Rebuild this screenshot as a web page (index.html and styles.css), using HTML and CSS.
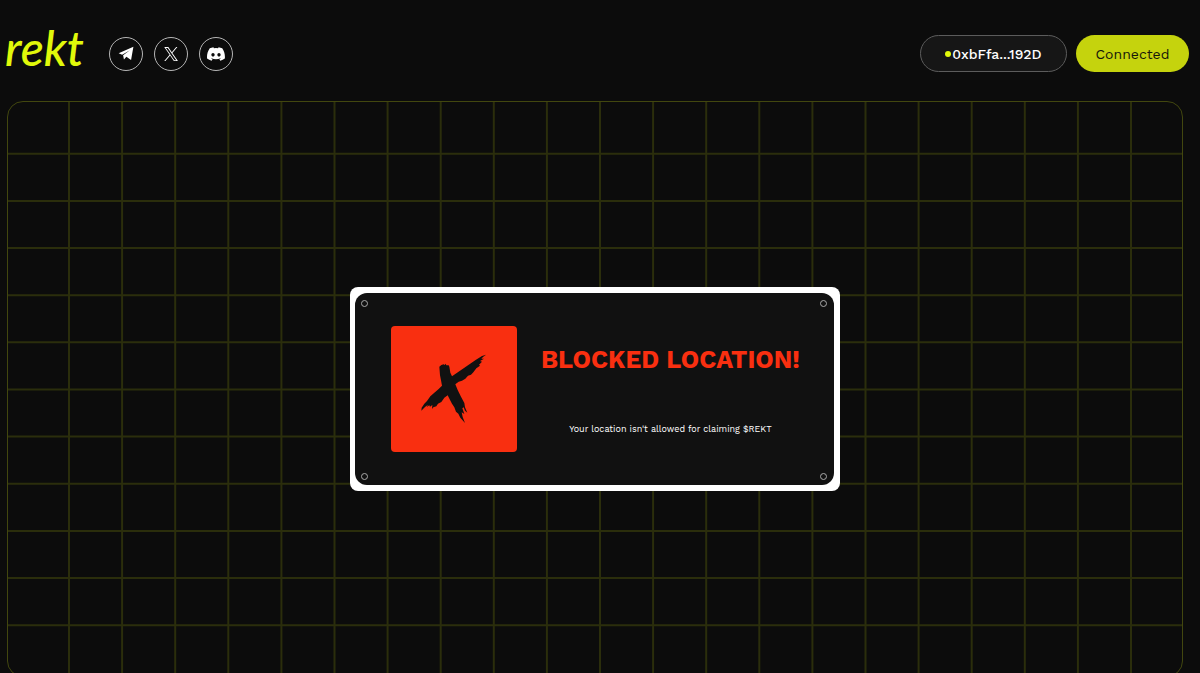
FILE: index.html
```html
<!DOCTYPE html>
<html lang="en">
<head>
    <meta charset="UTF-8">
    <meta name="viewport" content="width=device-width, initial-scale=1.0">
    <title>rekt - claim</title>
    <link rel="stylesheet" href="styles.css">
</head>
<body>
    <header class="header">
        <a class="logo" href="#">rekt</a>
        <nav class="socials" aria-label="Social links">
            <a class="social" href="#" aria-label="Telegram">
                <svg width="17" height="17" viewBox="0 0 16 16">
                    <path fill="currentColor" d="M14.5 1.6 12.3 14.1 7.9 11 5.6 13.6 4.8 9.6 11.2 4.9 3.9 9.1 0.6 7.8Z"/>
                </svg>
            </a>
            <a class="social" href="#" aria-label="X">
                <svg width="14" height="14" viewBox="0 0 24 24">
                    <path fill="currentColor" d="M14.3 10.2 23 0h-2.1l-7.5 8.8L7.4 0H.4l9.2 13.3L.4 24h2.1l8-9.3 6.4 9.3h7Zm-2.9 3.3-.9-1.3L3.2 1.6h3.2l6 8.5.9 1.3 7.7 11.1h-3.2Z"/>
                </svg>
            </a>
            <a class="social" href="#" aria-label="Discord">
                <svg width="18" height="18" viewBox="0 0 24 24">
                    <path fill="currentColor" d="M20.3 4.4A19.8 19.8 0 0 0 15.4 3l-.6 1.3a18.3 18.3 0 0 0-5.6 0L8.6 3a19.7 19.7 0 0 0-4.9 1.4C.5 9-.3 13.6.1 18.1a19.9 19.9 0 0 0 6 3l1.3-2.1-1.9-.9.4-.3c4 1.8 8.2 1.8 12.1 0l.4.3-1.9.9 1.3 2.1a19.8 19.8 0 0 0 6-3c.5-5.2-.8-9.7-3.5-13.7ZM8 15.3c-1.2 0-2.2-1.1-2.2-2.4S6.8 10.5 8 10.5s2.2 1.1 2.2 2.4-1 2.4-2.2 2.4Zm8 0c-1.2 0-2.2-1.1-2.2-2.4s1-2.4 2.2-2.4 2.2 1.1 2.2 2.4-1 2.4-2.2 2.4Z"/>
                </svg>
            </a>
        </nav>
        <div class="wallet">
            <button class="btn btn-address" type="button"><span class="dot"></span>0xbFfa...192D</button>
            <button class="btn btn-connected" type="button">Connected</button>
        </div>
    </header>

    <main class="stage">
        <svg class="grid-lines" viewBox="0 0 11740 5740" preserveAspectRatio="none" aria-hidden="true">
            <path d="M610 0v5740m531-5740v5740m531-5740v5740m531-5740v5740m531-5740v5740m531-5740v5740m531-5740v5740m531-5740v5740m531-5740v5740m531-5740v5740m531-5740v5740m531-5740v5740m531-5740v5740m531-5740v5740m531-5740v5740m531-5740v5740m531-5740v5740m531-5740v5740m531-5740v5740m531-5740v5740m531-5740v5740"/>
            <path d="M0 517h11740M0 989h11740M0 1460h11740M0 1932h11740M0 2403h11740M0 2875h11740M0 3346h11740M0 3818h11740M0 4289h11740M0 4761h11740M0 5232h11740"/>
        </svg>

        <section class="frame">
            <div class="card">
                <span class="screw screw-tl"></span>
                <span class="screw screw-tr"></span>
                <span class="screw screw-bl"></span>
                <span class="screw screw-br"></span>
                <div class="mark">
                    <svg width="88" height="88" viewBox="0 0 264 264" aria-hidden="true">
                        <path fill="#111" d="M88 65 94 60 101 58 104 60 107 56 109 61 116 61 118 65 121 83 126 94 150 77 174 61 198 44 216 33 228 29 219 36 214 41 222 41 210 48 216 50 207 59 210 62 199 70 190 82 183 89 174 92 166 101 156 107 146 110 136 118 143 135 153 155 163 174 165 187 172 203 165 197 161 187 157 190 163 207 155 202 158 216 165 234 151 218 145 206 138 200 133 187 126 176 119 163 113 151 103 158 94 171 84 176 79 184 70 187 66 192 67 180 60 185 58 181 50 186 54 179 45 186 34 197 35 188 43 176 51 168 61 154 73 143 86 132 96 122 93 106 90 91Z"/>
                    </svg>
                </div>
                <div class="message">
                    <h1>BLOCKED LOCATION!</h1>
                    <p>Your location isn't allowed for claiming $REKT</p>
                </div>
            </div>
        </section>
    </main>
</body>
</html>
```
FILE: styles.css
```css
:root {
    --bg: #0c0c0c;
    --lime: #e1f90a;
    --lime-btn: #c5d30d;
    --line: #2b2e0c;
    --red: #f92f10;
    --card: #111111;
}

* {
    margin: 0;
    padding: 0;
    box-sizing: border-box;
}

body {
    font-family: 'Work Sans', Inter, Arial, sans-serif;
    background: var(--bg);
    color: #fff;
    min-height: 100vh;
}

.header {
    display: flex;
    align-items: center;
    padding: 35px 11px 29px 5px;
}

.logo {
    width: 84px;
    margin-right: 20px;
    padding-bottom: 12px;
    color: var(--lime);
    font-family: Lato, sans-serif;
    font-size: 48px;
    font-style: italic;
    font-weight: 500;
    line-height: 24px;
    text-decoration: none;
}

.socials {
    display: flex;
    gap: 11px;
}

.social {
    display: flex;
    align-items: center;
    justify-content: center;
    width: 34px;
    height: 34px;
    border: 1px solid #b5b5b5;
    border-radius: 50%;
    color: #fff;
}

.wallet {
    display: flex;
    gap: 9px;
    margin-left: auto;
}

.btn {
    display: flex;
    align-items: center;
    justify-content: center;
    height: 37px;
    border: 1px solid transparent;
    border-radius: 19px;
    font-family: inherit;
    font-size: 14px;
    cursor: pointer;
}

.btn-address {
    width: 147px;
    background: #161616;
    border-color: #5c5c5c;
    color: #fff;
    font-weight: 500;
}

.btn-connected {
    width: 113px;
    background: var(--lime-btn);
    color: #15170a;
}

.dot {
    width: 6px;
    height: 6px;
    margin-right: 1px;
    border-radius: 50%;
    background: var(--lime);
}

.stage {
    position: relative;
    display: flex;
    align-items: center;
    justify-content: center;
    height: calc(100vh - 97px);
    min-height: 260px;
    margin: 0 17px 0 7px;
    border: 1px solid #42470f;
    border-radius: 16px;
    overflow: hidden;
}

.grid-lines {
    position: absolute;
    inset: 0;
    width: 100%;
    height: 100%;
    fill: none;
    stroke: var(--line);
    stroke-width: 20;
}

.frame {
    position: relative;
    width: 490px;
    padding: 6px 6px 6px 5px;
    background: #fff;
    border-radius: 8px;
}

.card {
    position: relative;
    display: flex;
    align-items: center;
    padding: 33px 35px 33px 36px;
    background: var(--card);
    border-radius: 12px;
}

.screw {
    position: absolute;
    width: 7px;
    height: 7px;
    border: 1px solid #aaa;
    border-radius: 50%;
}

.screw-tl { top: 7px; left: 6px; }
.screw-tr { top: 7px; right: 7px; }
.screw-bl { bottom: 5px; left: 6px; }
.screw-br { bottom: 5px; right: 7px; }

.mark {
    flex: none;
    display: flex;
    align-items: center;
    justify-content: center;
    width: 126px;
    height: 126px;
    border-radius: 4px;
    background: var(--red);
}

.message {
    flex: 1;
    display: flex;
    flex-direction: column;
    align-items: center;
    gap: 48px;
    margin-left: 24px;
    padding-top: 4px;
    white-space: nowrap;
}

.message h1 {
    color: var(--red);
    font-size: 25px;
    font-weight: 700;
    line-height: 28px;
}

.message p {
    font-size: 9px;
    line-height: 14px;
}
```
